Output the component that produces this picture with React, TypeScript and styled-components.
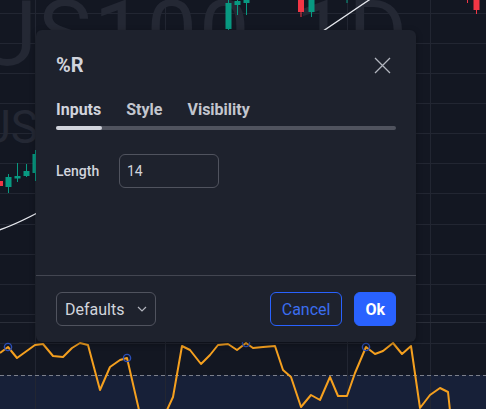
import React from 'react';
import styled, { createGlobalStyle } from 'styled-components';

const GlobalStyle = createGlobalStyle`
  html, body {
    margin: 0;
    padding: 0;
    background: #131722;
  }
  body {
    font-family: Roboto, "Liberation Sans", sans-serif;
    -webkit-font-smoothing: antialiased;
  }
  * { box-sizing: border-box; }
`;

const Screen = styled.div`
  position: relative;
  width: 486px;
  height: 409px;
  overflow: hidden;
  background: #131722;
`;

const ChartCanvas = styled.svg`
  display: block;
  width: 486px;
  height: 409px;
`;

const Dialog = styled.div`
  position: absolute;
  left: 36px;
  top: 30px;
  width: 380px;
  height: 312px;
  display: flex;
  flex-direction: column;
  background: #1e222d;
  border-radius: 6px;
  box-shadow: 0 2px 6px rgba(0, 0, 0, 0.35);
  color: #d1d4dc;
`;

const Header = styled.div`
  height: 50px;
  padding: 20px 18px 0 20px;
  display: flex;
  align-items: center;
  justify-content: space-between;
`;

const Title = styled.h2`
  margin: 0;
  font-size: 20px;
  font-weight: 700;
  line-height: 30px;
  color: #d1d4dc;
`;

const CloseButton = styled.button`
  width: 32px;
  height: 32px;
  padding: 0;
  border: 0;
  background: none;
  color: #b2b5be;
  display: flex;
  align-items: center;
  justify-content: center;
`;

const Tabs = styled.div`
  height: 50px;
  padding: 19px 20px 0;
`;

const TabList = styled.div`
  display: flex;
  gap: 25px;
  height: 22px;
`;

const Tab = styled.button<{ $active?: boolean }>`
  padding: 0;
  border: 0;
  background: none;
  font-family: inherit;
  font-size: 16px;
  font-weight: 700;
  line-height: 22px;
  color: ${(p) => (p.$active ? '#d1d4dc' : '#c3c6ce')};
`;

const Track = styled.div`
  margin-top: 5px;
  height: 4px;
  border-radius: 2px;
  background: #50535e;
  display: flex;
`;

const TrackThumb = styled.div<{ $width: number }>`
  width: ${(p) => p.$width}px;
  height: 100%;
  border-radius: 2px;
  background: #d1d4dc;
`;

const Body = styled.div`
  flex: 1;
  padding: 24px 20px 0;
`;

const Field = styled.div`
  display: grid;
  grid-template-columns: 63px 100px;
  align-items: center;
`;

const Label = styled.label`
  font-size: 14px;
  font-weight: 500;
  line-height: 20px;
  color: #d1d4dc;
`;

const NumberInput = styled.input`
  width: 100px;
  height: 34px;
  padding: 0 7px;
  border: 1px solid #50535e;
  border-radius: 6px;
  background: transparent;
  color: #d1d4dc;
  font-family: inherit;
  font-size: 14px;
  outline: none;
`;

const Divider = styled.div`
  height: 1px;
  background: #434651;
`;

const Footer = styled.div`
  display: flex;
  align-items: center;
  gap: 12px;
  padding: 16px 20px;
`;

const Select = styled.button`
  width: 100px;
  height: 34px;
  padding: 0 8px;
  border: 1px solid #50535e;
  border-radius: 6px;
  background: transparent;
  color: #d1d4dc;
  font-family: inherit;
  font-size: 16px;
  display: flex;
  align-items: center;
  justify-content: space-between;
  margin-right: auto;
`;

const Button = styled.button<{ $primary?: boolean }>`
  height: 34px;
  padding: 0 ${(p) => (p.$primary ? 10 : 11)}px;
  border-radius: 6px;
  border: 1px solid #2962ff;
  background: ${(p) => (p.$primary ? '#2962ff' : 'transparent')};
  color: ${(p) => (p.$primary ? '#ffffff' : '#3b6ef0')};
  font-family: inherit;
  font-size: 16px;
  font-weight: ${(p) => (p.$primary ? 700 : 400)};
`;

type Candle = { x: number; top: number; bottom: number; hi: number; lo: number; up: boolean };

const candles: Candle[] = [
  { x: 0, top: 181, bottom: 186, hi: 181, lo: 186, up: false },
  { x: 8.5, top: 177, bottom: 187, hi: 174, lo: 193, up: true },
  { x: 17.5, top: 176, bottom: 178.5, hi: 163, lo: 182, up: true },
  { x: 26.5, top: 171, bottom: 176, hi: 164, lo: 177, up: true },
  { x: 35.5, top: 154, bottom: 173, hi: 150, lo: 181, up: true },
  { x: 228.5, top: 3, bottom: 29, hi: -2, lo: 30, up: true },
  { x: 237.5, top: 1, bottom: 5, hi: -2, lo: 15, up: true },
  { x: 246.5, top: -3, bottom: 3, hi: -4, lo: 15, up: true },
  { x: 301, top: -5, bottom: 12, hi: -6, lo: 17, up: false },
  { x: 311.5, top: -5, bottom: 12, hi: -6, lo: 17, up: true },
  { x: 347, top: -5, bottom: -1, hi: -6, lo: 3, up: true },
  { x: 467.5, top: -5, bottom: -1, hi: -6, lo: 3, up: false },
  { x: 476.5, top: -5, bottom: 10, hi: -6, lo: 14, up: false },
];

const oscillator: [number, number][] = [
  [0, 353], [8, 347], [17, 358], [35, 345], [43, 344], [53, 356], [63, 357], [72, 348],
  [80, 343], [88, 345], [100, 390], [110, 367], [120, 360], [127, 358], [139, 410],
  [146, 432], [160, 432], [167, 410], [173, 397], [182, 346], [190, 350], [201, 364],
  [210, 355], [218, 345], [228, 344], [237, 350], [246, 343], [253, 348], [263, 347],
  [275, 346], [283, 370], [291, 377], [301, 407], [311, 395], [320, 400], [330, 377],
  [338, 396], [347, 396], [355, 373], [366, 347], [375, 354], [383, 351], [393, 343],
  [402, 354], [411, 346], [420, 408], [430, 395], [440, 388], [448, 392], [451, 420],
];

const pivots: [number, number][] = [
  [8, 347], [127, 358], [246, 343], [366, 347],
];

const gridRows = [13, 43, 73, 103, 133, 163, 193, 224, 254, 284, 314, 343];
const gridCols = [35.5, 165.5, 347.5, 430.5];

function PriceChart() {
  return (
    <ChartCanvas viewBox="0 0 486 409">
      <rect x="0" y="0" width="486" height="409" fill="#131722" />
      <rect x="0" y="375" width="486" height="34" fill="#172038" />
      {gridRows.map((y) => (
        <line key={`r${y}`} x1="0" x2="486" y1={y + 0.5} y2={y + 0.5} stroke="#222632" strokeWidth="1" />
      ))}
      {gridCols.map((x) => (
        <line key={`c${x}`} x1={x} x2={x} y1="0" y2="409" stroke="#222632" strokeWidth="1" />
      ))}
      <line x1="0" x2="486" y1="322.5" y2="322.5" stroke="#2a2e39" strokeWidth="1" />

      <text x="-22" y="65" fontFamily="Roboto, sans-serif" fontSize="90" letterSpacing="2" fill="#242834">
        US100, 1D
      </text>
      <text x="-19" y="143" fontFamily="Roboto, sans-serif" fontSize="46" fill="#242834">
        US 100 Cash CFD
      </text>

      {candles.map((c, i) => {
        const color = c.up ? '#089981' : '#f23645';
        return (
          <g key={i}>
            <line x1={c.x} x2={c.x} y1={c.hi} y2={c.lo} stroke={color} strokeWidth="1" />
            <rect x={c.x - 3} y={c.top} width="6" height={c.bottom - c.top} fill={color} />
          </g>
        );
      })}

      <path d="M -4 231 C 60 212, 250 80, 372 -2" fill="none" stroke="#e6e8ee" strokeWidth="1.3" />

      <line x1="0" x2="486" y1="375.5" y2="375.5" stroke="#7c808c" strokeWidth="1" strokeDasharray="4 3" />
      <polyline
        points={oscillator.map(([x, y]) => `${x},${y}`).join(' ')}
        fill="none"
        stroke="#f5a01f"
        strokeWidth="2"
        strokeLinejoin="round"
      />
      {pivots.map(([x, y]) => (
        <circle key={x} cx={x} cy={y} r="3.6" fill="none" stroke="#2b4fb8" strokeWidth="1.4" />
      ))}
    </ChartCanvas>
  );
}

function CloseIcon() {
  return (
    <svg width="17" height="17" viewBox="0 0 17 17">
      <path d="M1 1 L16 16 M16 1 L1 16" stroke="currentColor" strokeWidth="1.3" fill="none" />
    </svg>
  );
}

function Chevron() {
  return (
    <svg width="10" height="6" viewBox="0 0 10 6">
      <path d="M1 1 L5 5 L9 1" stroke="#b2b5be" strokeWidth="1.2" fill="none" />
    </svg>
  );
}

export default function App() {
  return (
    <>
      <GlobalStyle />
      <Screen>
        <PriceChart />
        <Dialog role="dialog">
          <Header>
            <Title>%R</Title>
            <CloseButton aria-label="Close">
              <CloseIcon />
            </CloseButton>
          </Header>
          <Tabs>
            <TabList>
              <Tab $active>Inputs</Tab>
              <Tab>Style</Tab>
              <Tab>Visibility</Tab>
            </TabList>
            <Track>
              <TrackThumb $width={46} />
            </Track>
          </Tabs>
          <Body>
            <Field>
              <Label>Length</Label>
              <NumberInput defaultValue="14" />
            </Field>
          </Body>
          <Divider />
          <Footer>
            <Select>
              Defaults
              <Chevron />
            </Select>
            <Button>Cancel</Button>
            <Button $primary>Ok</Button>
          </Footer>
        </Dialog>
      </Screen>
    </>
  );
}
